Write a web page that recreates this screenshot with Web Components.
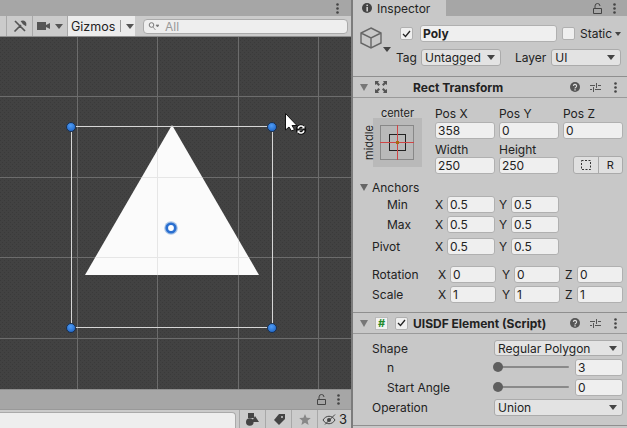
<!DOCTYPE html>
<html>
<head>
<meta charset="utf-8">
<style>
  html, body { margin: 0; padding: 0; width: 627px; height: 428px; overflow: hidden; background: #c8c8c8; }
  body { font: 12px/15px Inter, "Liberation Sans", sans-serif; color: #222; }
</style>
</head>
<body>
<app-shell>
  <scene-column slot="left"></scene-column>
  <inspector-panel slot="right"></inspector-panel>
</app-shell>

<script>
const LOCK_ICON = `<svg width="9" height="11" viewBox="0 0 9 11"><path d="M2 5V3a2.500 2.500 0 0 1 5 0M.5 5.500h8v5h-8z" fill="none" stroke="#444"/></svg>`
const DOTS_ICON = `<svg width="3" height="11" viewBox="0 0 3 11"><g fill="#444"><circle cx="1.500" cy="1.500" r="1.300"/><circle cx="1.500" cy="5.500" r="1.300"/><circle cx="1.500" cy="9.500" r="1.300"/></g></svg>`
const HELP_ICON = `<svg width="10" height="10" viewBox="0 0 10 10"><circle cx="5" cy="5" r="5" fill="#555"/><path d="M3.400 3.900a1.600 1.500 0 1 1 2.500 1.300C5.200 5.600 5 5.800 5 6.400" fill="none" stroke="#ddd" stroke-width="1.200"/><rect x="4.400" y="7.200" width="1.300" height="1.300" fill="#ddd"/></svg>`
const SLIDERS_ICON = `<svg width="11" height="11" viewBox="0 0 11 11"><path d="M0 3.500h5M8 3.500h3M0 7.500h2M5 7.500h6M6.500 1v5M3.500 5v5" stroke="#555" fill="none"/></svg>`

class AppShell extends HTMLElement {
  constructor() {
    super()
    this.attachShadow({ mode: 'open' })
    this.shadowRoot.innerHTML = `
      <style>
        :host { display: flex; width: 627px; height: 428px; }
        .left { width: 351px; flex: none; }
        .divider { width: 2px; flex: none; background: #7c7c7c; }
        .right { width: 274px; flex: none; }
      </style>
      <div class="left"><slot name="left"></slot></div>
      <div class="divider"></div>
      <div class="right"><slot name="right"></slot></div>
    `
  }
}

class SceneColumn extends HTMLElement {
  constructor() {
    super()
    this.attachShadow({ mode: 'open' })
    this.shadowRoot.innerHTML = `
      <style>
        :host { display: flex; flex-direction: column; height: 428px; }
        .tabbar { height: 16px; background: #a6a6a6; display: flex; justify-content: flex-end; align-items: center; padding-right: 12px; }
        .tools { height: 21px; box-sizing: border-box; background: #cbcbcb; display: flex; border-bottom: 1px solid #8f8f8f; }
        .tool { display: flex; align-items: center; justify-content: center; border-left: 1px solid #a8a8a8; box-sizing: border-box; }
        .gizmos { width: 68px; background: #ececec; border-left: 1px solid #a8a8a8; display: flex; align-items: center; box-sizing: border-box; padding-left: 3px; font-size: 12.500px; }
        .gizmos i { width: 1px; height: 12px; background: #999; margin: 0 5px 0 5px; }
        .search { margin: 3px 3px 2px 8px; flex: 1; border: 1px solid #aaa; border-radius: 4px; background: #eee; display: flex; align-items: center; color: #999; padding-left: 4px; gap: 6px; }
        .scene { flex: 1; position: relative; background: #404040; }
        svg.canvas { position: absolute; left: 0; top: 0; }
        .lockbar { height: 20px; background: #a6a6a6; border-top: 1px solid #8f8f8f; box-sizing: border-box; display: flex; justify-content: flex-end; align-items: center; gap: 11px; padding-right: 11px; }
        .filter { height: 19px; background: #cbcbcb; display: flex; border-top: 1px solid #999; box-sizing: border-box; }
        .filter .box { margin: 2px 3px 0 -3px; flex: 1; background: #eee; border: 1px solid #aaa; border-bottom: 0; border-radius: 4px 4px 0 0; }
        .filter .tool { width: 26px; }
        .filter .count { width: 34px; gap: 2px; font-size: 13px; }
      </style>
      <div class="tabbar">${DOTS_ICON}</div>
      <div class="tools">
        <div style="width:6px"></div>
        <div class="tool" style="width:26px">
          <svg width="14" height="14" viewBox="0 0 14 14"><path d="M1.500 12.500 8 6M9 2.500a2.800 2.800 0 0 1 3.500 3.300L10.500 4.500zM2 2l10 10" stroke="#555" stroke-width="1.700" fill="#555"/></svg>
        </div>
        <div class="tool" style="width:35px;gap:5px">
          <svg width="13" height="10" viewBox="0 0 13 10"><path d="M0 1h9v8H0zM9 4l4-2v6l-4-2z" fill="#555"/></svg>
          <svg width="8" height="5" viewBox="0 0 8 5"><path d="M0 0h8L4 5z" fill="#555"/></svg>
        </div>
        <div class="gizmos">Gizmos<i></i><svg width="8" height="5" viewBox="0 0 8 5"><path d="M0 0h8L4 5z" fill="#555"/></svg></div>
        <div class="search">
          <svg width="11" height="9" viewBox="0 0 11 9"><circle cx="3.500" cy="3" r="2.300" fill="none" stroke="#777"/><path d="M5 5l2.500 3M8 3h3L9.500 5z" stroke="#777" fill="#777" stroke-width=".7"/></svg>
          <span>All</span>
        </div>
      </div>
      <div class="scene">
        <svg class="canvas" width="351" height="352" viewBox="0 37 351 352">
          <defs>
            <pattern id="dither" width="4" height="4" patternUnits="userSpaceOnUse">
              <rect width="4" height="4" fill="#424242"/>
              <rect width="1" height="1" fill="#3a3a3a"/>
              <rect x="2" y="2" width="1" height="1" fill="#3a3a3a"/>
            </pattern>
            <radialGradient id="dot" cx=".45" cy=".35" r=".7">
              <stop offset="0" stop-color="#4f9cf5"/>
              <stop offset="1" stop-color="#1d62c2"/>
            </radialGradient>
          </defs>
          <rect y="37" width="351" height="352" fill="url(#dither)"/>
          <path d="M77.500 37v352M157.500 37v352M238.500 37v352M318.500 37v352M0 96.500h351M0 177.500h351M0 257.500h351M0 338.500h351" stroke="#6c6c6c" shape-rendering="crispEdges"/>
          <path d="M172 125 259 275H85z" fill="#fbfbfb"/>
          <path d="M157.500 151v124M142 177.500h60M238.500 240v35M96 257.500h152" stroke="#e6e6e6" shape-rendering="crispEdges" fill="none"/>
          <path d="M71.500 126.500h201v201h-201z" fill="none" stroke="#d6d6d6" shape-rendering="crispEdges"/>
          <g fill="url(#dot)" stroke="#1a2f4d">
            <circle cx="71" cy="127" r="4.500"/><circle cx="272" cy="127" r="4.500"/><circle cx="71" cy="328" r="4.500"/><circle cx="272" cy="328" r="4.500"/>
          </g>
          <circle cx="171" cy="228" r="6.800" fill="#a9c4e6"/>
          <circle cx="171" cy="228" r="5.600" fill="#2a6fd0"/>
          <circle cx="171" cy="228" r="2.900" fill="#fff"/>
          <path d="M285.500 113.500V130l3.500-3 2.500 4 3-1.500-2.500-4h5z" fill="#fff" stroke="#111"/>
          <circle cx="301" cy="129.500" r="3.500" fill="none" stroke="#111" stroke-width="3.500"/>
          <path d="M298 128.500a3.200 3.200 0 0 1 5.500-1.500M304 130.500a3.200 3.200 0 0 1-5.500 1.500" stroke="#fff" stroke-width="1.500" fill="none"/>
          <path d="M304.500 125.500v3h-3zM297.500 133.500v-3h3z" fill="#fff"/>
        </svg>
      </div>
      <div class="lockbar">${LOCK_ICON}${DOTS_ICON}</div>
      <div class="filter">
        <div class="box"></div>
        <div class="tool"><svg width="13" height="13" viewBox="0 0 13 13"><rect x="2" y="0" width="6" height="5" fill="#444"/><circle cx="3.800" cy="9" r="3.800" fill="#444"/><path d="M9 3l4 6H5.500z" fill="#444"/></svg></div>
        <div class="tool"><svg width="12" height="11" viewBox="0 0 12 11"><path d="M6 0h6v5l-6 6-5-5z" fill="#444"/><circle cx="9" cy="3" r="1" fill="#ccc"/></svg></div>
        <div class="tool"><svg width="12" height="11" viewBox="0 0 12 11"><path d="M6 0l1.600 3.800 4.200.3-3.200 2.700 1 4.200L6 8.800 2.400 11l1-4.200L.2 4.100l4.200-.3z" fill="#888"/></svg></div>
        <div class="tool count"><svg width="15" height="11" viewBox="0 0 15 11"><path d="M1 6c3-5 9-5 12 0-3 5-9 5-12 0zM3 10.500 13 .5" fill="none" stroke="#444"/><circle cx="7" cy="6" r="2" fill="#444"/></svg><span>3</span></div>
      </div>
    `
  }
}

class NumField extends HTMLElement {
  constructor() {
    super()
    this.attachShadow({ mode: 'open' })
    this.shadowRoot.innerHTML = `
      <style>
        :host { display: block; box-sizing: border-box; height: 17px; background: #efefef; border: 1px solid #b0b0b0; border-radius: 3px; padding-left: 2px; line-height: 15px; font-size: 12px; overflow: hidden; }
      </style>
      <slot></slot>
    `
  }
}

class DropDown extends HTMLElement {
  constructor() {
    super()
    this.attachShadow({ mode: 'open' })
    this.shadowRoot.innerHTML = `
      <style>
        :host { display: flex; align-items: center; justify-content: space-between; box-sizing: border-box; height: 17px; background: #e3e3e3; border: 1px solid #ababab; border-radius: 3px; padding: 0 5px 0 3px; font-size: 12px; line-height: 15px; white-space: nowrap; }
        svg { flex: none; }
      </style>
      <span><slot></slot></span>
      <svg width="8" height="5" viewBox="0 0 8 5"><path d="M0 0h8L4 5z" fill="#444"/></svg>
    `
  }
}

class CheckBox extends HTMLElement {
  constructor() {
    super()
    this.attachShadow({ mode: 'open' })
    const mark = this.hasAttribute('checked')
      ? `<svg width="9" height="8" viewBox="0 0 9 8"><path d="M1 4l2.500 2.500L8 1" fill="none" stroke="#222" stroke-width="1.300"/></svg>`
      : ''
    this.shadowRoot.innerHTML = `
      <style>
        :host { display: flex; align-items: center; justify-content: center; box-sizing: border-box; width: 13px; height: 13px; background: #efefef; border: 1px solid #b0b0b0; border-radius: 2px; flex: none; }
      </style>
      ${mark}
    `
  }
}

class CompHeader extends HTMLElement {
  constructor() {
    super()
    this.attachShadow({ mode: 'open' })
    this.shadowRoot.innerHTML = `
      <style>
        :host { display: flex; align-items: center; box-sizing: border-box; height: 22px; border-top: 1px solid #8f8f8f; border-bottom: 1px solid #9a9a9a; padding: 0 10px 0 7px; background: #c8c8c8; }
        .arrow { flex: none; margin-right: 7px; }
        .icons { width: 38px; flex: none; display: flex; align-items: center; gap: 7px; }
        .title { flex: 1; font-weight: 700; }
        .end { display: flex; align-items: center; }
        .end svg:nth-child(2) { margin: 0 13px 0 10px; }
      </style>
      <svg class="arrow" width="8" height="7" viewBox="0 0 8 7"><path d="M0 0h8L4 7z" fill="#777"/></svg>
      <div class="icons"><slot name="icons"></slot></div>
      <div class="title"><slot></slot></div>
      <div class="end">${HELP_ICON}${SLIDERS_ICON}${DOTS_ICON}</div>
    `
  }
}

class ObjectHeader extends HTMLElement {
  constructor() {
    super()
    this.attachShadow({ mode: 'open' })
    this.shadowRoot.innerHTML = `
      <style>
        :host { display: grid; box-sizing: border-box; height: 60px; grid-template-columns: 40px 1fr; padding: 9px 4px 0 7px; }
        .cube { position: relative; }
        .cube svg.tip { position: absolute; left: 23px; top: 22px; }
        .top { display: flex; align-items: center; height: 17px; }
        .name { width: 137px; margin: 0 5px 0 7px; font-weight: 700; background: #efefef; flex: none; }
        .static { margin-left: 5px; white-space: nowrap; }
        .static svg { margin-left: 3px; vertical-align: 2px; }
        .bottom { display: flex; align-items: center; height: 17px; margin-top: 7px; margin-left: -4px; }
        .bottom .tag { width: 80px; margin: 0 14px 0 4px; }
        .bottom .layer { width: 70px; margin-left: 5px; }
      </style>
      <div class="cube">
        <svg width="22" height="22" viewBox="0 0 22 22" fill="none" stroke="#666" stroke-width="1.400" style="margin-top:2px"><path d="M11 1 21 6v10l-10 5-10-5V6zM1 6l10 5 10-5M11 11v10"/></svg>
        <svg class="tip" width="8" height="5" viewBox="0 0 8 5"><path d="M0 0h8L4 5z" fill="#444"/></svg>
      </div>
      <div>
        <div class="top">
          <check-box checked></check-box>
          <num-field class="name">Poly</num-field>
          <check-box></check-box>
          <span class="static">Static<svg width="6" height="4" viewBox="0 0 6 4"><path d="M0 0h6L3 4z" fill="#444"/></svg></span>
        </div>
        <div class="bottom">
          <span>Tag</span><drop-down class="tag">Untagged</drop-down>
          <span>Layer</span><drop-down class="layer">UI</drop-down>
        </div>
      </div>
    `
  }
}

class RectTransform extends HTMLElement {
  constructor() {
    super()
    this.attachShadow({ mode: 'open' })
    this.shadowRoot.innerHTML = `
      <style>
        :host { display: block; box-sizing: border-box; height: 214px; padding-top: 8px; }
        .top { display: flex; padding-left: 12px; }
        .preset { display: grid; grid-template-columns: 8px 49px; grid-template-rows: 12px 49px; width: 70px; flex: none; }
        .preset .c { grid-column: 2; text-align: center; font-size: 11px; line-height: 14px; }
        .preset .m { writing-mode: vertical-rl; transform: rotate(180deg); font-size: 11px; line-height: 9px; text-align: center; grid-row: 2; }
        .preset svg { grid-column: 2; grid-row: 2; }
        .fields { display: grid; grid-template-columns: 60px 60px 60px; column-gap: 4px; }
        .fields span { height: 16px; }
        .fields .h { margin-top: 3px; height: 15px; }
        .btns { grid-column: 3; display: flex; width: 50px; height: 18px; margin-left: 10px; box-sizing: border-box; border: 1px solid #aaa; border-radius: 3px; background: #e0e0e0; margin-top: -1px; }
        .btns div { flex: 1; display: flex; align-items: center; justify-content: center; font-size: 11px; }
        .btns div + div { border-left: 1px solid #aaa; }
        .fold { display: flex; align-items: center; gap: 4px; padding-left: 7px; margin-top: 6px; height: 15px; }
        .r { display: grid; grid-template-columns: 82px 12px 48px 4px 12px 48px; height: 17px; line-height: 17px; margin-top: 3px; }
        .r.a { margin-top: 1px; }
        .r.p { margin-top: 5px; }
        .r .in { padding-left: 34px; }
        .r .out { padding-left: 19px; }
        .r3 { display: grid; grid-template-columns: 85px 12px 46px 6px 12px 46px 5px 12px 46px; height: 17px; line-height: 17px; margin-top: 3px; }
        .r3.first { margin-top: 11px; }
        .r3 .out { padding-left: 19px; }
      </style>
      <div class="top">
        <div class="preset">
          <div class="c">center</div>
          <div class="m">middle</div>
          <svg width="49" height="49" viewBox="0 0 49 49">
            <rect width="49" height="49" fill="#b9b9b9"/>
            <rect x="7.500" y="7.500" width="33" height="34" fill="none" stroke="#888"/>
            <rect x="16.500" y="16.500" width="16" height="16" fill="none" stroke="#222"/>
            <path d="M24.500 7v35M7 24.500h34" stroke="#d04545"/>
            <rect x="23" y="23" width="3" height="3" fill="#a86a10"/>
          </svg>
        </div>
        <div class="fields">
          <span>Pos X</span><span>Pos Y</span><span>Pos Z</span>
          <num-field>358</num-field><num-field>0</num-field><num-field>0</num-field>
          <span class="h">Width</span><span class="h">Height</span><span class="h"></span>
          <num-field>250</num-field><num-field>250</num-field>
          <div class="btns">
            <div><svg width="10" height="10" viewBox="0 0 10 10"><rect x=".5" y=".5" width="9" height="9" fill="none" stroke="#333" stroke-dasharray="2 1.500"/></svg></div>
            <div>R</div>
          </div>
        </div>
      </div>
      <div class="fold">
        <svg width="8" height="7" viewBox="0 0 8 7"><path d="M0 0h8L4 7z" fill="#666"/></svg>
        <span>Anchors</span>
      </div>
      <div class="r a"><span class="in">Min</span><span>X</span><num-field>0.5</num-field><i></i><span>Y</span><num-field>0.5</num-field></div>
      <div class="r"><span class="in">Max</span><span>X</span><num-field>0.5</num-field><i></i><span>Y</span><num-field>0.5</num-field></div>
      <div class="r p"><span class="out">Pivot</span><span>X</span><num-field>0.5</num-field><i></i><span>Y</span><num-field>0.5</num-field></div>
      <div class="r3 first"><span class="out">Rotation</span><span>X</span><num-field>0</num-field><i></i><span>Y</span><num-field>0</num-field><i></i><span>Z</span><num-field>0</num-field></div>
      <div class="r3"><span class="out">Scale</span><span>X</span><num-field>1</num-field><i></i><span>Y</span><num-field>1</num-field><i></i><span>Z</span><num-field>1</num-field></div>
    `
  }
}

class SdfElement extends HTMLElement {
  constructor() {
    super()
    this.attachShadow({ mode: 'open' })
    this.shadowRoot.innerHTML = `
      <style>
        :host { display: block; box-sizing: border-box; padding-top: 6px; border-bottom: 1px solid #8f8f8f; height: 92px; }
        .r { display: grid; grid-template-columns: 122px 1fr; padding: 0 4px 0 19px; height: 17px; line-height: 17px; margin-bottom: 3px; }
        .r.first { height: 16px; }
        .r.first drop-down { height: 16px; }
        .s { display: grid; grid-template-columns: 122px 81px 48px; padding: 0 4px 0 19px; height: 17px; line-height: 17px; margin-bottom: 3px; }
        .s .lab { padding-left: 15px; }
        .s .track { position: relative; height: 2px; background: #8a8a8a; margin: 7px 6px 0 0; border-radius: 1px; }
        .s .track b { position: absolute; left: -1px; top: -4px; width: 10px; height: 10px; border-radius: 50%; background: #5f5f5f; }
      </style>
      <div class="r first"><span>Shape</span><drop-down>Regular Polygon</drop-down></div>
      <div class="s"><span class="lab">n</span><div class="track"><b></b></div><num-field>3</num-field></div>
      <div class="s"><span class="lab">Start Angle</span><div class="track"><b></b></div><num-field>0</num-field></div>
      <div class="r"><span>Operation</span><drop-down>Union</drop-down></div>
    `
  }
}

class InspectorPanel extends HTMLElement {
  constructor() {
    super()
    this.attachShadow({ mode: 'open' })
    this.shadowRoot.innerHTML = `
      <style>
        :host { display: block; height: 428px; background: #c8c8c8; overflow: hidden; }
        .tabs { display: flex; height: 16px; background: #a6a6a6; align-items: center; }
        .tab { width: 93px; height: 16px; background: #c8c8c8; display: flex; align-items: center; gap: 5px; padding-left: 9px; box-sizing: border-box; }
        .tabs .sp { flex: 1; }
        .tabs .ic { display: flex; gap: 11px; align-items: center; padding-right: 11px; }
        .hash { display: flex; align-items: center; justify-content: center; box-sizing: border-box; width: 13px; height: 13px; background: #f2f2f2; border: 1px solid #bbb; color: #1f8a2c; font-weight: 700; font-size: 11px; }
      </style>
      <div class="tabs">
        <div class="tab">
          <svg width="10" height="10" viewBox="0 0 9 9"><circle cx="4.500" cy="4.500" r="4.500" fill="#444"/><rect x="4" y="1.500" width="1.300" height="1.300" fill="#ddd"/><rect x="4" y="3.600" width="1.300" height="4" fill="#ddd"/></svg>
          <span>Inspector</span>
        </div>
        <div class="sp"></div>
        <div class="ic">${LOCK_ICON}${DOTS_ICON}</div>
      </div>
      <object-header></object-header>
      <comp-header>
        <svg slot="icons" width="12" height="12" viewBox="0 0 12 12" fill="#555"><path d="M0 0h4L3 1.500 5 3.500 3.500 5 1.500 3 0 4zM12 0v4L10.500 3 8.500 5 7 3.500 9 1.500 8 0zM0 12V8l1.500 1 2-2L5 8.500l-2 2 1 1.500zM12 12H8l1-1.500-2-2L8.500 7l2 2L12 8z"/></svg>
        Rect Transform
      </comp-header>
      <rect-transform></rect-transform>
      <comp-header>
        <span slot="icons" class="hash">#</span>
        <check-box slot="icons" checked></check-box>
        UISDF Element (Script)
      </comp-header>
      <sdf-element></sdf-element>
    `
  }
}

customElements.define('app-shell', AppShell)
customElements.define('scene-column', SceneColumn)
customElements.define('num-field', NumField)
customElements.define('drop-down', DropDown)
customElements.define('check-box', CheckBox)
customElements.define('comp-header', CompHeader)
customElements.define('object-header', ObjectHeader)
customElements.define('rect-transform', RectTransform)
customElements.define('sdf-element', SdfElement)
customElements.define('inspector-panel', InspectorPanel)
</script>
</body>
</html>
